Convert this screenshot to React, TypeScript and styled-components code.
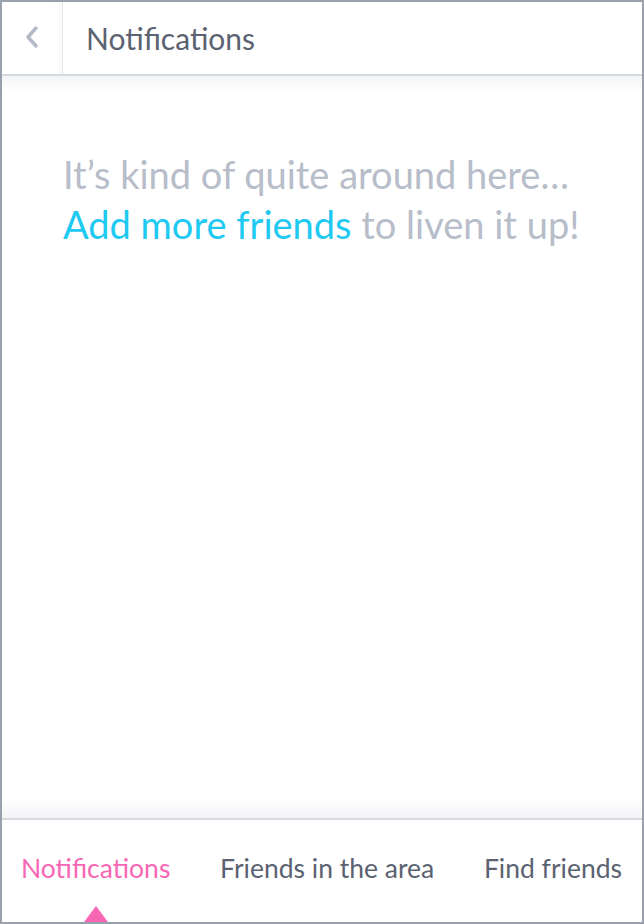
import React from "react";
import styled, { createGlobalStyle } from "styled-components";

const Global = createGlobalStyle`
  html, body { margin: 0; padding: 0; background: #ffffff; }
  * { box-sizing: border-box; }
`;

const Frame = styled.div`
  width: 644px;
  height: 924px;
  border: 2px solid #9aa1ad;
  display: flex;
  flex-direction: column;
  background: #ffffff;
  font-family: Lato, "Open Sans", sans-serif;
  overflow: hidden;
`;

const Header = styled.header`
  height: 74px;
  flex: none;
  display: flex;
  align-items: stretch;
  border-bottom: 2px solid #d6d9de;
  background: #ffffff;
`;

const BackButton = styled.button`
  width: 61px;
  flex: none;
  border: none;
  border-right: 1px solid #e4e6ea;
  background: linear-gradient(to right, #ffffff 85%, #fafafb 100%);
  display: flex;
  align-items: center;
  justify-content: center;
  padding: 0 1px 2px 0;
  cursor: pointer;
`;

const Title = styled.h1`
  margin: 0;
  padding-left: 23px;
  display: flex;
  align-items: center;
  font-size: 30px;
  font-weight: 400;
  color: #5b6271;
`;

const Content = styled.main`
  flex: 1;
  padding: 73px 20px 0 61px;
  background: linear-gradient(to bottom, #f3f4f6 0px, #ffffff 16px, #ffffff calc(100% - 18px), #f2f3f5 100%);
`;

const Message = styled.p`
  margin: 0;
  font-size: 38px;
  line-height: 50px;
  color: #b7bdc9;
  font-weight: 400;
`;

const Link = styled.a`
  color: #1ec9f2;
  text-decoration: none;
`;

const TabBar = styled.nav`
  height: 104px;
  flex: none;
  border-top: 2px solid #d6d9de;
  display: flex;
  align-items: stretch;
  justify-content: space-between;
  padding: 0 20px 0 19px;
  background: #ffffff;
`;

const Tab = styled.a<{ $active?: boolean }>`
  position: relative;
  display: flex;
  align-items: center;
  padding-bottom: 6px;
  font-size: 26.5px;
  color: ${(p) => (p.$active ? "#f866b4" : "#5b6271")};
  text-decoration: none;
  cursor: pointer;
  &::after {
    content: "";
    display: ${(p) => (p.$active ? "block" : "none")};
    position: absolute;
    left: 50%;
    transform: translateX(-50%);
    bottom: 0;
    width: 0;
    height: 0;
    border-left: 12px solid transparent;
    border-right: 12px solid transparent;
    border-bottom: 16px solid #f866b4;
  }
`;

export default function App() {
  return (
    <>
      <Global />
      <Frame>
        <Header>
          <BackButton aria-label="Back">
            <svg width="16" height="24" viewBox="0 0 16 24">
              <path d="M12 3 L4 12 L12 21" fill="none" stroke="#b3bac7" strokeWidth="3.5" strokeLinecap="round" strokeLinejoin="round" />
            </svg>
          </BackButton>
          <Title>Notifications</Title>
        </Header>
        <Content>
          <Message>
            It’s kind of quite around here…
            <br />
            <Link href="#">Add more friends</Link> to liven it up!
          </Message>
        </Content>
        <TabBar>
          <Tab $active>Notifications</Tab>
          <Tab>Friends in the area</Tab>
          <Tab>Find friends</Tab>
        </TabBar>
      </Frame>
    </>
  );
}
